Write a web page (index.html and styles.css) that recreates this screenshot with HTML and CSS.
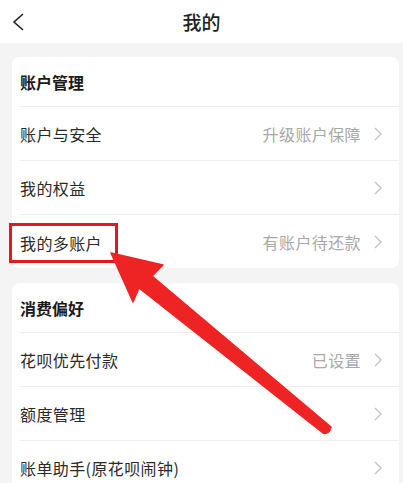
FILE: index.html
```html
<!DOCTYPE html>
<html lang="zh">
<head>
    <meta charset="UTF-8">
    <title>我的</title>
    <link rel="stylesheet" href="styles.css">
</head>
<body>

<div class="topbar">
    <span class="back">
        <svg width="14" height="20" viewBox="0 0 14 20"><path d="M12 2 L3 10 L12 18" fill="none" stroke="#222" stroke-width="1.6"/></svg>
    </span>
    <h2>我的</h2>
    <span></span>
</div>

<div class="page">
    <div class="card">
        <div class="card-title">账户管理</div>
        <div class="row">
            <span class="label">账户与安全</span>
            <span class="extra">升级账户保障</span>
            <svg class="arrow" width="10" height="16" viewBox="0 0 10 16"><path d="M2 2 L8 8 L2 14" fill="none" stroke="#c4c4c4" stroke-width="1.4"/></svg>
        </div>
        <div class="row">
            <span class="label">我的权益</span>
            <span class="extra"></span>
            <svg class="arrow" width="10" height="16" viewBox="0 0 10 16"><path d="M2 2 L8 8 L2 14" fill="none" stroke="#c4c4c4" stroke-width="1.4"/></svg>
        </div>
        <div class="row">
            <span class="label marked">我的多账户</span>
            <span class="extra">有账户待还款</span>
            <svg class="arrow" width="10" height="16" viewBox="0 0 10 16"><path d="M2 2 L8 8 L2 14" fill="none" stroke="#c4c4c4" stroke-width="1.4"/></svg>
        </div>
    </div>

    <div class="card">
        <div class="card-title">消费偏好</div>
        <div class="row">
            <span class="label">花呗优先付款</span>
            <span class="extra">已设置</span>
            <svg class="arrow" width="10" height="16" viewBox="0 0 10 16"><path d="M2 2 L8 8 L2 14" fill="none" stroke="#c4c4c4" stroke-width="1.4"/></svg>
        </div>
        <div class="row">
            <span class="label">额度管理</span>
            <span class="extra"></span>
            <svg class="arrow" width="10" height="16" viewBox="0 0 10 16"><path d="M2 2 L8 8 L2 14" fill="none" stroke="#c4c4c4" stroke-width="1.4"/></svg>
        </div>
        <div class="row">
            <span class="label">账单助手(原花呗闹钟)</span>
            <span class="extra"></span>
            <svg class="arrow" width="10" height="16" viewBox="0 0 10 16"><path d="M2 2 L8 8 L2 14" fill="none" stroke="#c4c4c4" stroke-width="1.4"/></svg>
        </div>
    </div>
</div>

<!-- red pointer drawn over the list -->
<svg class="pointer" width="403" height="483" viewBox="0 0 403 483">
    <path d="M111 253 L163 265 L152 276 L331 427 Q329 435 323 433 L139 288 L133 302 Z" fill="#ee2424" stroke="#ee2424" stroke-width="1.5" stroke-linejoin="round"/>
</svg>

</body>
</html>
```

FILE: styles.css
```css
body {
    margin: 0;
    width: 403px;
    height: 483px;
    overflow: hidden;
    background: #f4f4f4;
    font-family: "Noto Sans CJK SC", "Noto Sans", sans-serif;
    color: #333;
    position: relative;
}

.topbar {
    height: 43px;
    background: #fff;
    display: grid;
    grid-template-columns: 60px 1fr 60px;
    align-items: center;
}

.topbar h2 {
    margin: 0;
    text-align: center;
    font-size: 19px;
    font-weight: 500;
    color: #222;
}

.back {
    display: flex;
    padding-left: 11px;
    padding-top: 1px;
}

.page {
    padding: 14px 4px 0 12px;
    display: flex;
    flex-direction: column;
    gap: 15px;
}

.card {
    background: #fff;
    border-radius: 8px;
}

.card-title {
    height: 49px;
    display: flex;
    align-items: center;
    padding-left: 8px;
    font-size: 16px;
    font-weight: bold;
    color: #1a1a1a;
}

.row {
    height: 53px;
    margin-left: 8px;
    border-top: 1px solid #eee;
    display: flex;
    align-items: center;
    padding-right: 16px;
}

.label {
    font-size: 16px;
    letter-spacing: 0.4px;
    color: #2a2a2a;
}

.marked {
    border: 3px solid #e5161c;
    padding: 5px 13px 5px 8px;
    margin-left: -11px;
    margin-top: 2px;
}

.extra {
    flex: 1;
    text-align: right;
    font-size: 16px;
    letter-spacing: 0.4px;
    color: #a8a8a8;
    margin-right: 12px;
}

.arrow {
    display: block;
}

.pointer {
    position: absolute;
    left: 0;
    top: 0;
}
```
